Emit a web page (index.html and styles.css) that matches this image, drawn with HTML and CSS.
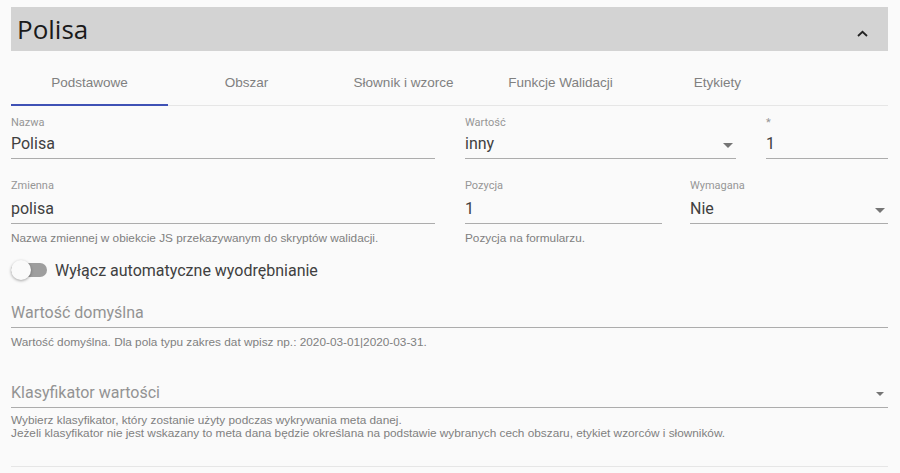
FILE: index.html
```html
<!doctype html>
<html>

<head>
	<title>Polisa</title>
	<link rel="stylesheet" href="styles.css">
</head>

<body>
	<div class="panel">
		<!-- panel header -->
		<div class="panel-header">
			<div class="panel-title">Polisa</div>
			<svg class="chevron" width="11" height="7" viewBox="0 0 11 7"><path d="M1 6 L5.5 1.8 L10 6" fill="none" stroke="#222" stroke-width="1.8"/></svg>
		</div>

		<!-- tabs -->
		<div class="tabs">
			<div class="tab active">Podstawowe</div>
			<div class="tab">Obszar</div>
			<div class="tab">Słownik i wzorce</div>
			<div class="tab">Funkcje Walidacji</div>
			<div class="tab">Etykiety</div>
		</div>

		<div class="form">
			<div class="form-row">
				<div class="field w-name">
					<div class="field-label">Nazwa</div>
					<div class="field-input">Polisa</div>
				</div>
				<div class="field w-value">
					<div class="field-label">Wartość</div>
					<div class="field-input select">inny<span class="arrow"></span></div>
				</div>
				<div class="field w-star">
					<div class="field-label">*</div>
					<div class="field-input">1</div>
				</div>
			</div>

			<div class="form-row row-2">
				<div class="field w-name">
					<div class="field-label">Zmienna</div>
					<div class="field-input">polisa</div>
					<div class="hint">Nazwa zmiennej w obiekcie JS przekazywanym do skryptów walidacji.</div>
				</div>
				<div class="field w-pos">
					<div class="field-label">Pozycja</div>
					<div class="field-input">1</div>
					<div class="hint">Pozycja na formularzu.</div>
				</div>
				<div class="field w-req">
					<div class="field-label">Wymagana</div>
					<div class="field-input select">Nie<span class="arrow"></span></div>
				</div>
			</div>

			<div class="toggle-row">
				<div class="toggle"><span class="toggle-knob"></span></div>
				<div class="toggle-label">Wyłącz automatyczne wyodrębnianie</div>
			</div>

			<div class="field wide default-field">
				<div class="field-input placeholder">Wartość domyślna</div>
				<div class="hint">Wartość domyślna. Dla pola typu zakres dat wpisz np.: 2020-03-01|2020-03-31.</div>
			</div>

			<div class="field wide classifier-field">
				<div class="field-input placeholder select">Klasyfikator wartości<span class="arrow small"></span></div>
				<div class="hint">Wybierz klasyfikator, który zostanie użyty podczas wykrywania meta danej.<br>Jeżeli klasyfikator nie jest wskazany to meta dana będzie określana na podstawie wybranych cech obszaru, etykiet wzorców i słowników.</div>
			</div>
		</div>
		<div class="panel-bottom"></div>
	</div>
</body>

</html>
```

FILE: styles.css
```css
* { margin: 0; padding: 0; box-sizing: border-box; }
body { background-color: #fafafa; font-family: Roboto, 'Liberation Sans', Arial, sans-serif; color: #333; padding: 7px 12px 0 11px; }
.panel { width: 877px; }
.panel-header { height: 44px; background-color: #d3d3d3; display: flex; align-items: center; justify-content: space-between; padding: 0 20px 0 6px; }
.panel-title { font-family: 'Open Sans', 'Noto Sans', sans-serif; font-size: 26px; color: #1a1a1a; line-height: 44px; }
.chevron { margin-top: 9px; }
.tabs { display: flex; height: 55px; border-bottom: 1px solid #e6e6e6; }
.tab { width: 157px; text-align: center; font-family: 'Liberation Sans', Arial, sans-serif; font-size: 13.5px; color: #808080; padding-top: 24px; }
.tab.active { border-bottom: 2px solid #3f51b5; margin-bottom: -1px; }
.form-row { display: flex; padding-top: 10px; }
.form-row.row-2 { padding-top: 20px; }
.row-2 .field-input { margin-top: 6px; }
.field-label { font-size: 11px; line-height: 14px; color: #969696; }
.field-input { font-size: 16px; line-height: 20px; margin-top: 4px; padding-bottom: 4px; border-bottom: 1px solid #acacac; color: #404040; position: relative; }
.w-name { width: 424px; margin-right: 30px; }
.w-value { width: 271px; margin-right: 30px; }
.w-star { width: 122px; }
.w-pos { width: 197px; margin-right: 28px; }
.w-req { width: 198px; }
.hint { font-family: 'Liberation Sans', Arial, sans-serif; font-size: 11.8px; line-height: 13px; color: #808080; margin-top: 8px; }
.arrow { position: absolute; right: 3px; top: 9px; width: 0; height: 0; border-left: 5px solid transparent; border-right: 5px solid transparent; border-top: 5px solid #757575; }
.arrow.small { border-left-width: 4px; border-right-width: 4px; border-top-width: 4px; right: 4px; }
.toggle-row { display: flex; align-items: center; margin-top: 13px; height: 24px; }
.toggle { width: 36px; height: 14px; border-radius: 7px; background-color: #9e9e9e; position: relative; margin-right: 8px; }
.toggle-knob { position: absolute; left: 0; top: -3px; width: 20px; height: 20px; border-radius: 50%; background-color: #fafafa; box-shadow: 0 1px 3px rgba(0, 0, 0, 0.35); }
.toggle-label { font-size: 16px; color: #404040; }
.wide .field-input { margin-top: 0; }
.placeholder { color: #939393; }
.default-field { margin-top: 21px; }
.classifier-field { margin-top: 34px; }
.classifier-field .hint { margin-top: 6px; }
.panel-bottom { margin-top: 26px; border-bottom: 1px solid #e6e6e6; }
```
